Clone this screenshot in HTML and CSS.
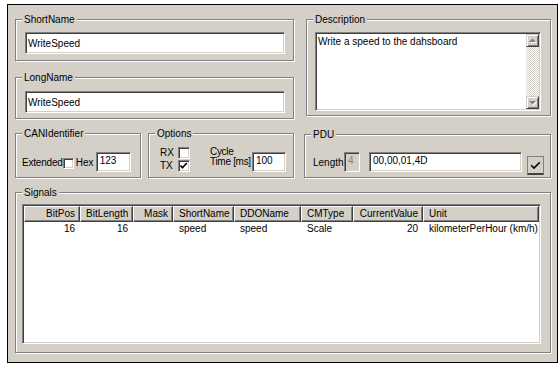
FILE: index.html
```html
<!DOCTYPE html>
<html>
<head>
<meta charset="utf-8">
<link rel="stylesheet" href="styles.css">
</head>
<body>
<div class="window">
  <div class="row1">
    <div class="col-left">
      <div class="group g-short">
        <div class="legend">ShortName</div>
        <div class="field f-name">WriteSpeed</div>
      </div>
      <div class="group g-long">
        <div class="legend">LongName</div>
        <div class="field f-name">WriteSpeed</div>
      </div>
    </div>
    <div class="group g-desc">
      <div class="legend">Description</div>
      <div class="memo">
        <div class="memo-text">Write a speed to the dahsboard</div>
        <div class="vscroll">
          <div class="sbtn"><svg width="8" height="6" viewBox="0 0 8 6"><polygon points="1,5 4.5,1.5 8,5" fill="#fff"/><polygon points="0,4 3.5,0.5 7,4" fill="#808080"/></svg></div>
          <div class="track"></div>
          <div class="sbtn"><svg width="8" height="6" viewBox="0 0 8 6"><polygon points="1,2 4.5,5.5 8,2" fill="#fff"/><polygon points="0,1 3.5,4.5 7,1" fill="#808080"/></svg></div>
        </div>
      </div>
    </div>
  </div>

  <div class="row2">
    <div class="group g-can">
      <div class="legend">CANIdentifier</div>
      <div class="can-row">
        <span class="lbl-ext">Extended</span>
        <span class="chk"></span>
        <span class="lbl-hex">Hex</span>
        <div class="field f-small f-hex">123</div>
      </div>
    </div>
    <div class="group g-opt">
      <div class="legend">Options</div>
      <div class="opt-row">
        <div class="rxtx">
          <span class="rt-lbl">RX</span><span class="chk"></span>
          <span class="rt-lbl">TX</span><span class="chk"><svg width="10" height="10" viewBox="0 0 10 10"><polyline points="1.5,4.5 3.5,6.8 7.8,2" fill="none" stroke="#000" stroke-width="1.7"/></svg></span>
        </div>
        <div class="cycle">Cycle<br>Time [ms]</div>
        <div class="field f-small f-cycle">100</div>
      </div>
    </div>
    <div class="group g-pdu">
      <div class="legend">PDU</div>
      <div class="pdu-row">
        <span class="lbl-len">Length</span>
        <div class="field f-small f-len">4</div>
        <div class="field f-small f-bytes">00,00,01,4D</div>
        <div class="okbtn"><svg width="11" height="9" viewBox="0 0 11 9"><polyline points="1.2,4.2 4,7 9.8,1.2" fill="none" stroke="#000" stroke-width="1.6"/></svg></div>
      </div>
    </div>
  </div>

  <div class="group g-sig">
    <div class="legend">Signals</div>
    <div class="list">
      <div class="lhead">
        <div class="hc r c1">BitPos</div>
        <div class="hc r c2">BitLength</div>
        <div class="hc r c3">Mask</div>
        <div class="hc c4">ShortName</div>
        <div class="hc c5">DDOName</div>
        <div class="hc c6">CMType</div>
        <div class="hc r c7">CurrentValue</div>
        <div class="hc c8">Unit</div>
      </div>
      <div class="lrow">
        <div class="dc r c1">16</div>
        <div class="dc r c2">16</div>
        <div class="dc r c3"></div>
        <div class="dc c4">speed</div>
        <div class="dc c5">speed</div>
        <div class="dc c6">Scale</div>
        <div class="dc r c7">20</div>
        <div class="dc c8">kilometerPerHour (km/h)</div>
      </div>
    </div>
  </div>
</div>
</body>
</html>
```

FILE: styles.css
```css
* { box-sizing: border-box; }

body {
  margin: 0;
  background: #fff;
  font-family: "Liberation Sans", Arial, sans-serif;
  font-size: 10px;
  line-height: 13px;
  color: #000;
}

.window {
  margin: 4px 0 0 7px;
  width: 551px;
  height: 359px;
  border: 1px solid #000;
  background: #d4d0c8;
  padding: 14px 6px 0 7px;
  display: flex;
  flex-direction: column;
}

/* etched group box, legend sits on the top edge */
.group {
  border: 1px solid #808080;
  box-shadow: inset 1px 1px #fff, 1px 1px #fff;
  display: flex;
  flex-direction: column;
  align-items: flex-start;
  flex-shrink: 0;
}

.legend {
  height: 13px;
  margin: -7px 0 -6px 6px;
  padding: 0 2px;
  background: #d4d0c8;
  white-space: nowrap;
}

/* sunken edit field */
.field {
  border: 1px solid;
  border-color: #808080 #fff #fff #808080;
  box-shadow: inset 1px 1px #404040, inset -1px -1px #d4d0c8;
  background: #fff;
  padding: 0 2px;
  white-space: nowrap;
  overflow: hidden;
  flex-shrink: 0;
}

/* row 1 */
.row1 {
  display: flex;
  gap: 12px;
  height: 100px;
  flex-shrink: 0;
}
.col-left {
  width: 279px;
  display: flex;
  flex-direction: column;
  gap: 16px;
}
.g-short { height: 42px; }
.g-long { height: 42px; }
.f-name {
  width: 260px;
  height: 22px;
  display: flex;
  align-items: center;
  margin-left: 9px;
}
.g-short .f-name { margin-top: 12px; }
.g-long .f-name { margin-top: 13px; }

.g-desc {
  width: 245px;
  height: 97px;
}
.memo {
  width: 226px;
  height: 79px;
  margin: 12px 0 0 8px;
  display: flex;
  border: 1px solid;
  border-color: #808080 #fff #fff #808080;
  box-shadow: inset 1px 1px #404040, inset -1px -1px #d4d0c8;
  background: #fff;
  padding: 1px;
}
.memo-text {
  flex: 1;
  padding: 1px 0 0 1px;
}
.vscroll {
  width: 13px;
  display: flex;
  flex-direction: column;
}
.sbtn {
  height: 13px;
  background: #d4d0c8;
  border: 1px solid;
  border-color: #d4d0c8 #404040 #404040 #d4d0c8;
  box-shadow: inset 1px 1px #fff, inset -1px -1px #808080;
  display: flex;
  align-items: center;
  justify-content: center;
}
.sbtn svg { display: block; }
.track {
  flex: 1;
  background: repeating-conic-gradient(#d4d0c8 0% 25%, #fff 0% 50%) 0 0 / 2px 2px;
}

/* row 2 */
.row2 {
  display: flex;
  margin-top: 14px;
  height: 45px;
  align-items: flex-start;
  flex-shrink: 0;
}
.g-can { width: 126px; height: 45px; margin-right: 7px; }
.g-opt { width: 146px; height: 45px; margin-right: 10px; }
.g-pdu { width: 247px; height: 44px; margin-top: 1px; }

.f-small {
  height: 20px;
  padding: 1px 0 0 3px;
}

.can-row {
  display: flex;
  align-items: center;
  height: 20px;
  margin: 18px 0 0 6px;
}
.lbl-ext {
  white-space: nowrap;
  letter-spacing: -0.2px;
}
.chk {
  width: 12px;
  height: 12px;
  border: 1px solid;
  border-color: #808080 #fff #fff #808080;
  box-shadow: inset 1px 1px #404040, inset -1px -1px #d4d0c8;
  background: #fff;
  display: block;
  flex-shrink: 0;
}
.chk svg { display: block; }
.can-row .chk { margin-top: 2px; width: 11px; height: 11px; }
.lbl-hex { margin-left: 2px; width: 18px; }
.f-hex { width: 35px; margin-left: 2px; }

.opt-row {
  display: flex;
  align-items: flex-start;
  margin: 12px 0 0 11px;
}
.rxtx {
  display: grid;
  grid-template-columns: 18px 12px;
  grid-template-rows: 12px 12px;
  row-gap: 1px;
  margin-top: 1px;
  line-height: 12px;
}
.cycle {
  margin-left: 20px;
  width: 42px;
  line-height: 10px;
  margin-top: 1px;
  letter-spacing: -0.3px;
  white-space: nowrap;
}
.f-cycle { width: 34px; margin-top: 6px; }

.pdu-row {
  display: flex;
  align-items: flex-start;
  margin: 17px 0 0 8px;
}
.lbl-len { width: 31px; margin-top: 4px; }
.f-len {
  width: 16px;
  background: #d4d0c8;
  color: #808080;
}
.f-bytes { width: 153px; margin-left: 9px; }
.okbtn {
  width: 17px;
  height: 19px;
  margin: 4px 0 0 5px;
  background: #d4d0c8;
  border: 1px solid;
  border-color: #808080 #808080 #404040 #808080;
  box-shadow: inset 0 -1px #404040;
  display: flex;
  align-items: center;
  justify-content: center;
}

/* signals */
.g-sig {
  margin-top: 14px;
  height: 161px;
}
.list {
  width: 519px;
  height: 140px;
  margin: 11px 0 0 6px;
  border: 1px solid;
  border-color: #808080 #fff #fff #808080;
  box-shadow: inset 1px 1px #404040, inset -1px -1px #d4d0c8;
  background: #fff;
  padding: 1px;
}
.lhead {
  display: flex;
  height: 16px;
}
.hc {
  height: 16px;
  background: #d4d0c8;
  border: 1px solid;
  border-color: #fff #404040 #404040 #fff;
  box-shadow: inset -1px -1px #808080;
  padding: 0 4px 0 5px;
  line-height: 14px;
  white-space: nowrap;
  overflow: hidden;
}
.lrow {
  display: flex;
  height: 13px;
  line-height: 13px;
}
.dc {
  padding: 0 5px 0 6px;
  white-space: nowrap;
}
.r { text-align: right; }
.c1 { width: 56px; }
.c2 { width: 53px; }
.c3 { width: 40px; }
.c4 { width: 61px; }
.c5 { width: 67px; }
.c6 { width: 52px; }
.c7 { width: 70px; }
.c8 { width: 116px; }
```
